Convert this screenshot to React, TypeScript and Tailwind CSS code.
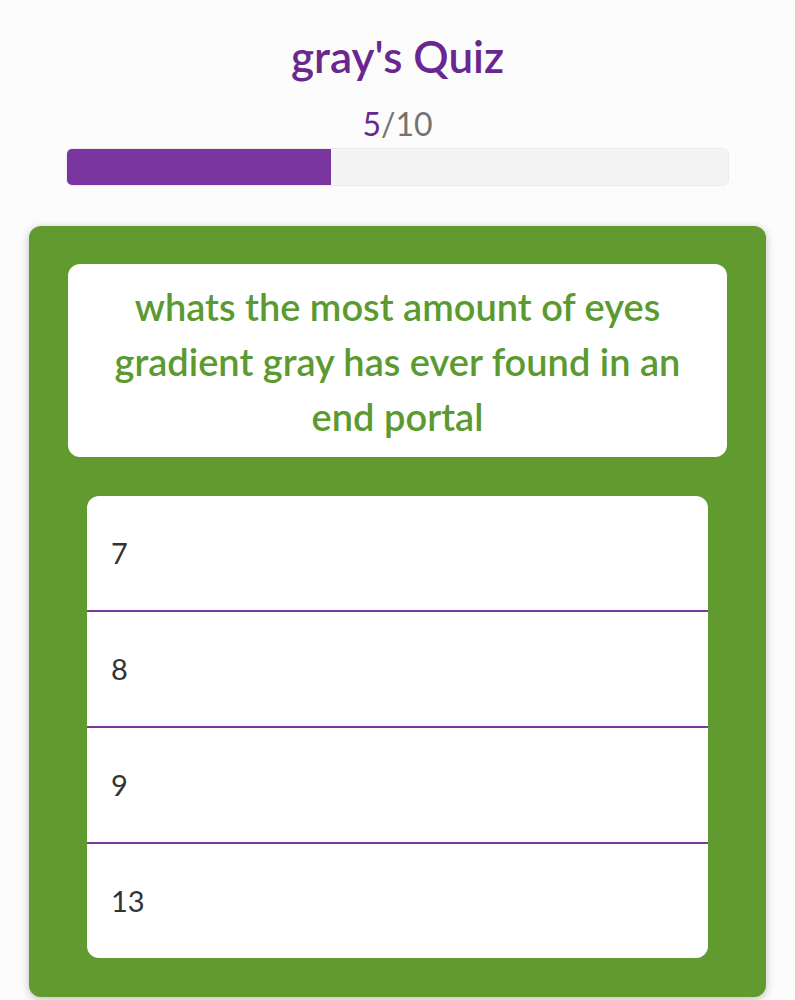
import React from "react";

const answers = ["7", "8", "9", "13"];

const App = () => {
  const current = 5;
  const total = 10;

  return (
    <div
      className="min-h-[1000px] w-full bg-[#fcfcfc] overflow-hidden"
      style={{ fontFamily: "Lato, 'Open Sans', sans-serif" }}
    >
      <div className="w-[663px] mx-auto pt-[24px]">
        <h1 className="text-center text-[44px] leading-[64px] font-semibold text-[#6a2790]">
          gray's Quiz
        </h1>
        <p className="text-center text-[32px] leading-[40px] mt-[16px] text-[#737373]">
          <span className="text-[#6a2790]">{current}</span>/{total}
        </p>
        <div className="mt-[4px] h-[38px] rounded-[6px] bg-[#f4f4f4] border border-[#ececec] overflow-hidden">
          <div className="h-full w-[40%] bg-[#7b35a0]" />
        </div>
      </div>

      <div className="mx-[29px] mt-[40px] rounded-[12px] bg-[#619a2f] shadow-[0_2px_8px_rgba(0,0,0,0.25)] px-[39px] pt-[38px] pb-[39px]">
        <div className="bg-white rounded-[12px] px-[40px] pt-[15px] pb-[13px]">
          <p className="text-center text-[38px] leading-[55px] font-semibold text-[#5b9a30]">
            whats the most amount of eyes gradient gray has ever found in an end portal
          </p>
        </div>

        <div className="mx-[19px] mt-[39px] bg-white rounded-[12px] overflow-hidden">
          {answers.map((a, i) => (
            <div
              key={a}
              className={
                "flex items-center px-[24px] text-[29px] text-[#333333] " +
                (i > 0 ? "h-[116px] border-t-2 border-[#7b3a98]" : "h-[114px]")
              }
            >
              {a}
            </div>
          ))}
        </div>
      </div>
    </div>
  );
};

export default App;
